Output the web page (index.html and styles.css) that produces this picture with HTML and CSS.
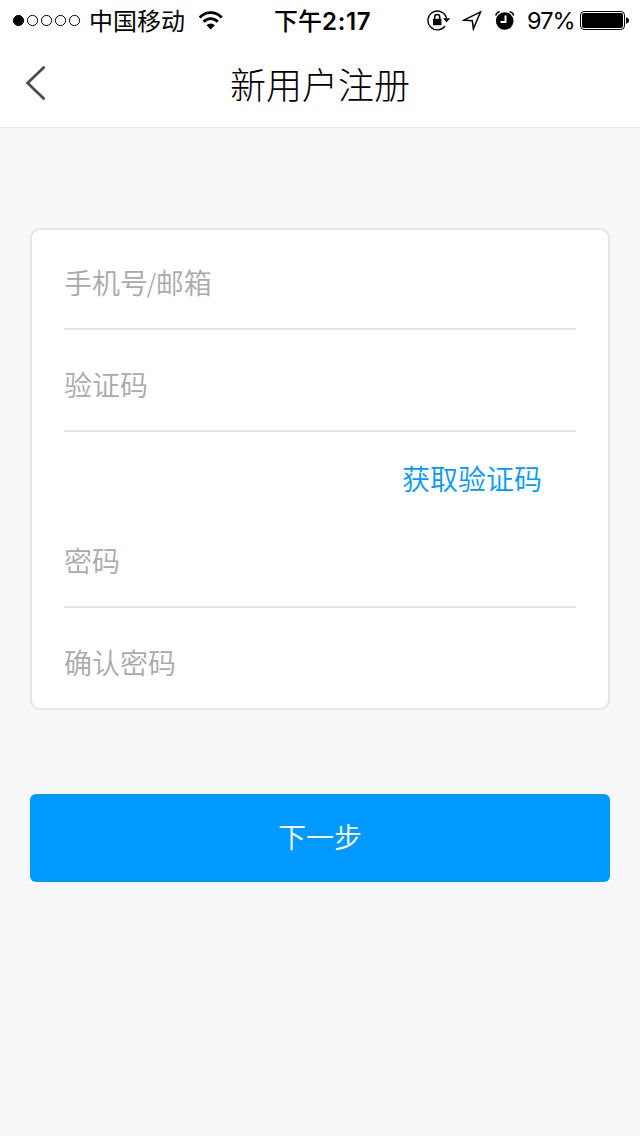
FILE: index.html
```html
<!DOCTYPE html>
<html lang="zh-CN">
<head>
<meta charset="utf-8">
<title>新用户注册</title>
<link rel="stylesheet" href="styles.css">
</head>
<body>
<div class="status">
  <svg class="signal" width="70" height="14" viewBox="0 0 70 14" fill="none" stroke="#000" stroke-width="1">
    <circle cx="6.5" cy="6.5" r="5.1" fill="#000"/><circle cx="20.5" cy="6.5" r="5.1"/><circle cx="34.5" cy="6.5" r="5.1"/><circle cx="48.5" cy="6.5" r="5.1"/><circle cx="62.5" cy="6.5" r="5.1"/>
  </svg>
  <span class="carrier">中国移动</span>
  <svg class="wifi" width="26" height="20" viewBox="0 0 26 20" fill="none" stroke="#000" stroke-width="2.8">
    <path d="M1.7 6.5Q6.4 1.6 12.7 1.6T23.7 6.5"/><path d="M5.6 10.8Q8.6 7.6 12.7 7.6T19.8 10.8"/><path d="M8.5 14.2Q10.2 12.4 12.7 12.4T16.9 14.2L12.7 18.4Z" fill="#000" stroke="none"/>
  </svg>
  <span class="time">下午<b>2:17</b></span>
  <svg class="lock" width="24" height="22" viewBox="0 0 24 22" fill="none" stroke="#000">
    <path d="M18 16A9.4 9.4 0 1 1 19.5 8.2" stroke-width="1.4"/>
    <path d="M16 8.2H23.3L19.6 12.2Z" fill="#000" stroke="none"/>
    <rect x="6" y="8.8" width="8.4" height="6.4" fill="#000" stroke="none"/><path d="M7.7 9.5V7a2.5 2.5 0 0 1 5 0V9.5" stroke-width="1.5"/>
  </svg>
  <svg class="locate" width="20" height="20" viewBox="0 0 20 20" fill="none" stroke="#000" stroke-width="1.5">
    <path d="M18.6 .8L1.8 9.2L10.3 9.7L11.4 17.8Z"/>
  </svg>
  <svg class="alarm" width="22" height="20" viewBox="0 0 22 20" fill="none" stroke="#000">
    <circle cx="10.7" cy="10" r="8.8" fill="#000" stroke="none"/><path d="M1.7 4.5Q2.5 1.5 5.7 .8M15.7 .8Q18.9 1.5 19.7 4.5" stroke-width="1.5"/><path d="M11.5 4.5V11H6.5" stroke="#fff" stroke-width="2"/>
  </svg>
  <span class="percent">97%</span>
  <svg class="battery" width="50" height="20" viewBox="0 0 50 20">
    <rect x=".5" y=".5" width="44" height="18" rx="3.6" fill="none" stroke="#000"/><rect x="2" y="2" width="41" height="15" rx="2" fill="#000"/><path d="M46 6.2Q49 6.9 49 9.5T46 12.8Z" fill="#000"/>
  </svg>
</div>
<header class="nav">
  <svg class="back" width="24" height="38" viewBox="0 0 24 38" fill="none" stroke="#4c4c4c" stroke-width="2.8" stroke-linecap="round"><path d="M19.7 3.5L3.6 19L19.7 34.5"/></svg>
  <h1 class="title">新用户注册</h1>
</header>
<main class="page">
  <form class="card">
    <div class="field first">手机号<span class="slash">/</span>邮箱</div>
    <div class="field">验证码</div>
    <div class="code"><a class="code-link">获取验证码</a></div>
    <div class="field">密码</div>
    <div class="field last">确认密码</div>
  </form>
  <div class="next">下一步</div>
</main>
</body>
</html>
```
FILE: styles.css
```css
* { box-sizing: border-box; }
body {
  margin: 0;
  min-height: 1136px;
  background: #f8f8f8;
  color: #000;
  font-family: "Noto Sans CJK SC", sans-serif;
}
svg { display: block; flex: none; }
.status {
  display: flex;
  align-items: center;
  height: 40px;
  padding: 1px 0 0 12px;
  background: #fff;
  font-size: 24px;
  line-height: 39px;
  white-space: nowrap;
}
.carrier { width: 96px; margin-left: 7px; padding-bottom: 2px; line-height: 37px; }
.wifi { margin-left: 13px; }
.time { width: 97px; margin-left: 50px; font-weight: 500; }
.time b { font-family: Inter, sans-serif; font-weight: 600; letter-spacing: 0.7px; }
.lock { margin-left: 56px; }
.locate { margin-left: 11px; }
.alarm { margin-left: 12px; }
.percent { width: 48px; margin-left: 11px; font-family: Inter, sans-serif; font-size: 23.5px; letter-spacing: -0.9px; }
.battery { margin-left: 5px; }
.nav {
  display: grid;
  grid-template-columns: 100px 1fr 100px;
  align-items: center;
  height: 88px;
  background: #fff;
  border-bottom: 1px solid #e5e5e5;
}
.back { margin: 0 0 2px 24px; }
.title {
  margin: 0;
  text-align: center;
  font-size: 36px;
  font-weight: 300;
  line-height: 84px;
  padding-bottom: 2px;
}
.page { padding: 100px 30px 0; }
.card {
  height: 482px;
  padding: 0 32px;
  background: #fff;
  border: 2px solid #e5e5e5;
  border-radius: 10px;
}
.field {
  height: 102px;
  padding-top: 4px;
  border-bottom: 2px solid #e5e5e5;
  color: #aaa;
  font-size: 28px;
  font-weight: 350;
  line-height: 100px;
}
.slash { display: inline-block; margin: 0 -1.6px; transform: scale(0.85, 0.9); }
.first { height: 100px; padding-top: 2px; }
.last { height: 100px; border-bottom: 0; }
.code {
  height: 74px;
  padding-right: 34px;
  text-align: right;
  color: #09f;
  font-size: 28px;
  font-weight: 350;
  line-height: 92px;
}
.next {
  height: 88px;
  margin-top: 84px;
  border-radius: 6px;
  background: #09f;
  color: #fff;
  text-align: center;
  font-size: 28px;
  font-weight: 350;
  line-height: 84px;
}
```
